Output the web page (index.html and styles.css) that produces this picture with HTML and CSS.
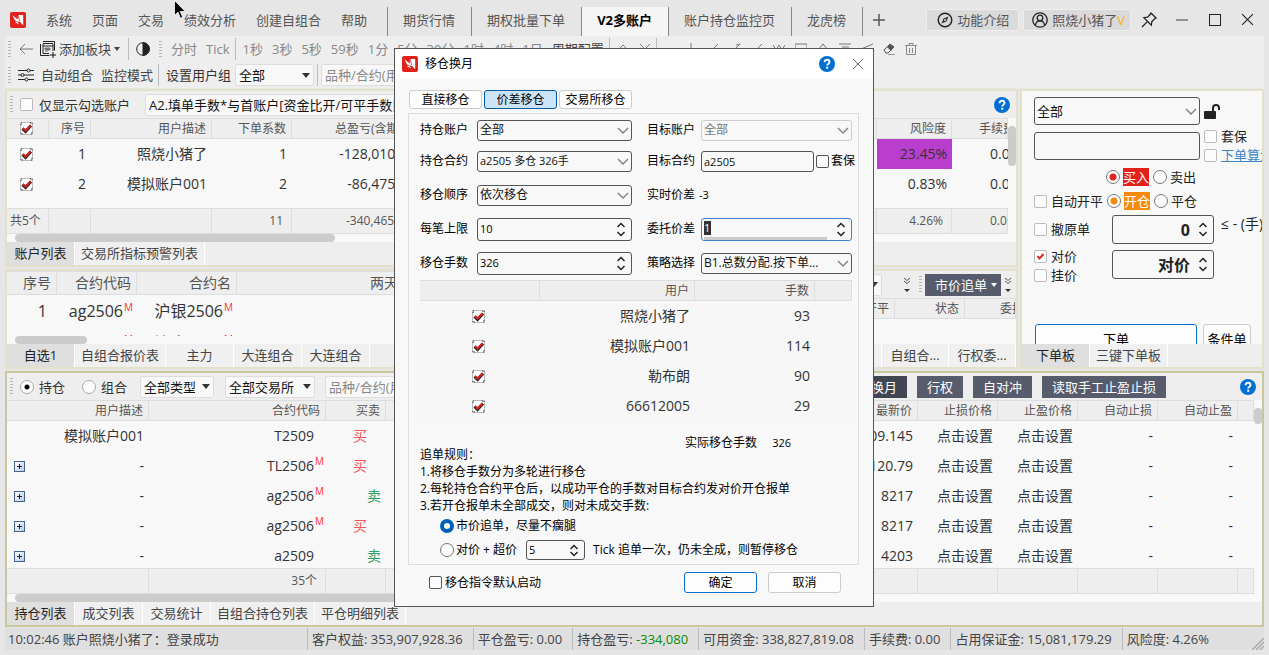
FILE: index.html
```html
<!DOCTYPE html>
<html lang="zh-CN">

<head>
    <meta charset="UTF-8">
    <title>V2多账户</title>
    <link rel="stylesheet" href="styles.css">
</head>

<body>
    <!-- 图标 -->
    <svg class="sprite" aria-hidden="true">
        <symbol id="logo" viewBox="0 0 16 16">
            <rect width="16" height="16" rx="2" fill="#e2211c"/>
            <path d="M2.500 3.200L7.800 7.600V4L9.400 3h3.800v10.200L9.800 9.800 7.400 9.600 5 8.400z" fill="#fff"/>
            <path d="M8 3.500l1.800 5.500" stroke="#e2211c" stroke-width=".8"/>
            <path d="M5 10.200l2.200-.6 2 3z" fill="#fff"/>
        </symbol>
        <symbol id="help" viewBox="0 0 16 16">
            <circle cx="8" cy="8" r="8" fill="#006fd1"/>
            <path d="M5.600 6.200C5.600 4.600 6.700 3.800 8 3.800s2.500.8 2.500 2.200c0 1.700-2.300 1.800-2.300 3.500" fill="none" stroke="#fff" stroke-width="1.900"/>
            <rect x="7.200" y="10.700" width="2" height="2" fill="#fff"/>
        </symbol>
        <symbol id="close" viewBox="0 0 12 12"><path d="M1 1l10 10M11 1L1 11"/></symbol>
        <symbol id="up" viewBox="0 0 10 6"><path d="M1.500 5L5 1.500 8.500 5"/></symbol>
        <symbol id="down" viewBox="0 0 10 6"><path d="M1.500 1L5 4.500 8.500 1"/></symbol>
        <symbol id="more" viewBox="0 0 8 16"><path d="M1 1l3 2.500L7 1M1 4l3 2.500L7 4" fill="none" stroke="#555"/><path d="M1 12h6l-3 3z" fill="#333"/></symbol>
    </svg>

    <!-- 标题栏 -->
    <header class="titlebar">
        <svg class="logo"><use href="#logo"/></svg>
        <nav class="menu">
            <a href="#">系统</a>
            <a href="#">页面</a>
            <a href="#">交易</a>
            <a href="#">绩效分析</a>
            <a href="#">创建自组合</a>
            <a href="#">帮助</a>
        </nav>
        <nav class="pages">
            <a href="#">期货行情</a>
            <a href="#">期权批量下单</a>
            <a href="#" class="active">V2多账户</a>
            <a href="#">账户持仓监控页</a>
            <a href="#">龙虎榜</a>
        </nav>
        <button class="icon-btn add" aria-label="新建">
            <svg width="12" height="12" viewBox="0 0 12 12"><path d="M6 0v12M0 6h12" stroke="#555" stroke-width="1.500"/></svg>
        </button>
        <div class="window-tools">
            <button class="pill">
                <svg width="16" height="16" viewBox="0 0 16 16"><circle cx="8" cy="8" r="6.800" stroke-width="1.400"/><path d="M11.500 4.500L9.500 9.500l-5 2 2-5z" fill="#333" stroke="none"/><circle cx="8" cy="8" r="1" fill="#ddd" stroke="none"/></svg>
                功能介绍
            </button>
            <button class="pill">
                <svg width="16" height="16" viewBox="0 0 16 16"><circle cx="8" cy="8" r="7.200" stroke-width="1.300"/><circle cx="8" cy="6" r="2.800" stroke-width="1.300"/><path d="M3.400 13.200c.4-3 2.300-4.300 4.600-4.300s4.200 1.300 4.600 4.300" stroke-width="1.300"/></svg>
                照烧小猪了<b class="vip">V</b>
            </button>
            <button class="icon-btn" aria-label="置顶">
                <svg width="16" height="16" viewBox="0 0 16 16"><path d="M10 1l5 5-1.300.7-2.800 2.800-.6 3.600-7.400-7.400 3.600-.6 2.800-2.800zM6.400 9.600L1 15" stroke-width="1.300"/></svg>
            </button>
            <button class="icon-btn" aria-label="最小化">
                <svg width="12" height="12" viewBox="0 0 12 12"><path d="M0 6h12" stroke-width="1.500" stroke="#777"/></svg>
            </button>
            <button class="icon-btn" aria-label="最大化">
                <svg width="12" height="12" viewBox="0 0 12 12"><rect x=".5" y=".5" width="11" height="11"/></svg>
            </button>
            <button class="icon-btn" aria-label="关闭">
                <svg width="13" height="13"><use href="#close"/></svg>
            </button>
        </div>
    </header>

    <!-- 工具栏 -->
    <div class="toolbars">
        <div class="toolbar periods">
            <i class="grip"></i>
            <button class="icon-btn back" aria-label="返回">
                <svg width="14" height="12" viewBox="0 0 14 12"><path d="M14 6H1M6 1L1 6l5 5" stroke="#777"/></svg>
            </button>
            <button class="plain dark">
                <svg width="17" height="17" viewBox="0 0 17 17"><path d="M3 .5h11.500v9M.5 3v11.500h9M3 2.500h10M3 3v9.500h6M13 3v7M3 5h10" /><path d="M5 7h5v2H5zM5 10h3" fill="#777" stroke="#777"/><path d="M13 11v6M10 14h6" stroke="#111"/></svg>
                添加板块
                <svg class="caret" width="6" height="4" viewBox="0 0 6 4"><path d="M0 0h6L3 4z"/></svg>
            </button>
            <i class="sep"></i>
            <button class="icon-btn contrast" aria-label="切换主题">
                <svg width="14" height="14" viewBox="0 0 14 14"><circle cx="7" cy="7" r="6.300"/><path d="M7 .7a6.300 6.300 0 0 1 0 12.600z" fill="#222"/></svg>
            </button>
            <i class="grip"></i>
            <button class="plain">分时</button>
            <button class="plain">Tick</button>
            <i class="sep"></i>
            <button class="plain">1秒</button>
            <button class="plain">3秒</button>
            <button class="plain">5秒</button>
            <button class="plain">59秒</button>
            <button class="plain">1分</button>
            <button class="plain">5分</button>
            <button class="plain">30分</button>
            <button class="plain">1时</button>
            <button class="plain">4时</button>
            <button class="plain">1日</button>
            <button class="plain dark">周期配置</button>
            <i class="sep"></i>
            <span class="draw-tools">
                <svg viewBox="0 0 12 12"><path d="M2 6l4-4 4 4v5"/></svg>
                <svg viewBox="0 0 12 12"><path d="M1 1l10 10M11 1L1 11"/></svg>
            </span>
            <i class="sep"></i>
            <span class="draw-tools second">
                <svg viewBox="0 0 12 12"><path d="M6 0v12"/></svg>
                <svg viewBox="0 0 12 12"><path d="M11 1L1 11"/></svg>
                <svg viewBox="0 0 12 12"><path d="M11 1L1 11M7 2l4-1"/></svg>
                <svg viewBox="0 0 12 12"><path d="M11 1L1 11"/></svg>
                <svg viewBox="0 0 12 12"><path d="M0 2l3 5 3-5 3 5 3-5"/></svg>
                <svg viewBox="0 0 12 12"><rect x="0" y="1" width="12" height="9"/></svg>
                <svg viewBox="0 0 12 12"><path d="M1 7l5-6 5 6z"/></svg>
                <svg viewBox="0 0 12 12"><path d="M0 1h12M3 4h7M0 8h12"/></svg>
                <svg viewBox="0 0 12 12"><path d="M12 1L0 6"/></svg>
                <svg viewBox="0 0 12 12"><path d="M1 7l6-6 4 3-6 6H3z" stroke="#555"/><path d="M4 4l3-3 4 3-3 4z" fill="#555" stroke="none"/><path d="M5 11.500h7" stroke="#999"/></svg>
                <svg viewBox="0 0 12 12"><path d="M0 2.500h12M4 2V.5h4V2M1.500 3v8.500h9V3M4.500 5v5M7.500 5v5" stroke="#888"/></svg>
            </span>
        </div>
        <div class="toolbar">
            <i class="grip"></i>
            <button class="icon-btn tune" aria-label="参数">
                <svg width="16" height="14" viewBox="0 0 16 14"><path d="M0 2.500h9M12 2.500h4M0 7h3M6 7h10M0 11.500h7M10 11.500h6"/><circle cx="10.500" cy="2.500" r="1.500"/><circle cx="4.500" cy="7" r="1.500"/><circle cx="8.500" cy="11.500" r="1.500"/></svg>
            </button>
            <button class="plain dark">自动组合</button>
            <button class="plain dark">监控模式</button>
            <i class="sep"></i>
            <label class="group-label" for="group">设置用户组</label>
            <select id="group" class="flat"><option>全部</option></select>
            <i class="sep tight"></i>
            <input class="flat search" type="text" placeholder="品种/合约(用户)" aria-label="品种/合约">
        </div>
    </div>

    <main class="workspace">
        <!-- 账户列表 -->
        <section class="panel accounts">
            <div class="toolbar">
                <i class="grip"></i>
                <label class="check wide"><input type="checkbox">仅显示勾选账户</label>
                <select class="flat rule" aria-label="分配规则"><option>A2.填单手数*与首账户[资金比开/可平手数比平]</option></select>
                <button class="help" aria-label="帮助"><svg width="16" height="16"><use href="#help"/></svg></button>
            </div>
            <div class="body">
                <div class="scroll">
                    <table>
                        <colgroup><col class="w42"><col class="w42"><col class="w121"><col class="w80"><col class="w128"><col><col class="w75"><col class="w56"></colgroup>
                        <thead>
                            <tr>
                                <th class="center"><input class="tick" type="checkbox" checked aria-label="全选"></th>
                                <th>序号</th><th>用户描述</th><th>下单系数</th><th>总盈亏(含期权)</th><th></th><th>风险度</th><th class="cut">手续费</th>
                            </tr>
                        </thead>
                        <tbody>
                            <tr>
                                <td class="center"><input class="tick" type="checkbox" checked aria-label="照烧小猪了"></td>
                                <td>1</td><td>照烧小猪了</td><td>1</td><td>-128,010.00</td><td></td><td class="risk">23.45%</td><td class="cut num">0.00</td>
                            </tr>
                            <tr>
                                <td class="center"><input class="tick" type="checkbox" checked aria-label="模拟账户001"></td>
                                <td>2</td><td>模拟账户001</td><td>2</td><td>-86,475.00</td><td></td><td>0.83%</td><td class="cut num">0.00</td>
                            </tr>
                            <tr class="rest"><td colspan="8"></td></tr>
                        </tbody>
                        <tfoot>
                            <tr><td class="total">共5个</td><td></td><td></td><td>11</td><td>-340,465.00</td><td></td><td>4.26%</td><td class="cut num">0.00</td></tr>
                        </tfoot>
                    </table>
                </div>
                <div class="vbar"><i></i></div>
            </div>
            <div class="hbar"><i></i></div>
            <nav class="tabs">
                <a href="#" class="active">账户列表</a>
                <a href="#">交易所指标预警列表</a>
            </nav>
        </section>

        <!-- 自选行情 -->
        <section class="panel quotes">
            <div class="body">
                <div class="scroll">
                    <table class="large">
                        <colgroup><col class="w50"><col class="w80"><col class="w100"><col class="w195"><col></colgroup>
                        <thead>
                            <tr><th>序号</th><th>合约代码</th><th>合约名</th><th>两天走势</th><th></th></tr>
                        </thead>
                        <tbody>
                            <tr><td class="idx">1</td><td class="code">ag2506<sup>M</sup></td><td class="code">沪银2506<sup>M</sup></td><td></td><td></td></tr>
                            <tr><td class="idx">2</td><td class="code">au2506<sup>M</sup></td><td class="code">沪金2506<sup>M</sup></td><td></td><td></td></tr>
                        </tbody>
                    </table>
                </div>
            </div>
            <div class="hbar"><i></i></div>
            <nav class="tabs">
                <a href="#" class="active">自选1</a>
                <a href="#">自组合报价表</a>
                <a href="#">主力</a>
                <a href="#">大连组合</a>
                <a href="#">大连组合</a>
            </nav>
        </section>

        <!-- 委托 -->
        <section class="panel orders">
            <div class="toolbar">
                <select class="flat state" aria-label="委托状态"><option>全部</option></select>
                <svg class="more" width="8" height="16"><use href="#more"/></svg>
                <i class="grip"></i>
                <button class="solid chase">市价追单<svg class="caret" width="6" height="4" viewBox="0 0 6 4"><path d="M0 0h6L3 4z"/></svg></button>
                <svg class="more" width="8" height="16"><use href="#more"/></svg>
            </div>
            <div class="body">
                <div class="scroll">
                    <table>
                        <colgroup><col><col class="w70"><col class="w51"></colgroup>
                        <thead><tr><th>开平</th><th>状态</th><th class="cut wide">委托价</th></tr></thead>
                    </table>
                </div>
            </div>
            <nav class="tabs end">
                <a href="#">委托列表</a>
                <a href="#">自组合...</a>
                <a href="#">行权委...</a>
            </nav>
        </section>

        <!-- 下单板 -->
        <section class="panel ticket">
            <form class="ticket-form">
                <div class="line">
                    <select class="boxed" aria-label="账户"><option>全部</option></select>
                    <svg width="17" height="17" viewBox="0 0 17 17"><rect x="0" y="8" width="12" height="8" rx="1" fill="#222" stroke="none"/><path d="M9 8V5a3 3 0 0 1 6 0v2" fill="none" stroke="#222" stroke-width="2"/></svg>
                </div>
                <div class="line contract">
                    <input class="boxed" type="text" aria-label="合约">
                    <div class="stack">
                        <label class="check"><input type="checkbox">套保</label>
                        <div class="check"><input type="checkbox" aria-label="下单算法"><a href="#">下单算法</a></div>
                    </div>
                </div>
                <div class="line side">
                    <label class="radio buy"><input type="radio" name="side" checked><span>买入</span></label>
                    <label class="radio"><input type="radio" name="side">卖出</label>
                </div>
                <div class="line offset">
                    <label class="check"><input type="checkbox">自动开平</label>
                    <label class="radio open"><input type="radio" name="offset" checked><span>开仓</span></label>
                    <label class="radio"><input type="radio" name="offset">平仓</label>
                </div>
                <div class="amounts">
                    <div class="stack">
                        <label class="check origin"><input type="checkbox">撤原单</label>
                        <label class="check"><input type="checkbox" checked>对价</label>
                        <label class="check"><input type="checkbox">挂价</label>
                    </div>
                    <div class="spins">
                        <div class="line">
                            <span class="spin big"><input type="text" value="0" aria-label="手数"><span class="arrows"><button type="button" aria-label="加"><svg width="10" height="6"><use href="#up"/></svg></button><button type="button" aria-label="减"><svg width="10" height="6"><use href="#down"/></svg></button></span></span>
                            <span class="limit">≤ - (手)</span>
                        </div>
                        <span class="spin big"><input type="text" value="对价" aria-label="价格"><span class="arrows"><button type="button" aria-label="加"><svg width="10" height="6"><use href="#up"/></svg></button><button type="button" aria-label="减"><svg width="10" height="6"><use href="#down"/></svg></button></span></span>
                    </div>
                </div>
                <div class="submit">
                    <button type="button" class="btn primary">下单</button>
                    <button type="button" class="btn">条件单</button>
                </div>
            </form>
            <nav class="tabs">
                <a href="#" class="active">下单板</a>
                <a href="#">三键下单板</a>
            </nav>
        </section>

        <!-- 持仓列表 -->
        <section class="panel positions">
            <div class="toolbar">
                <i class="grip"></i>
                <label class="radio"><input type="radio" name="kind" checked>持仓</label>
                <label class="radio"><input type="radio" name="kind">组合</label>
                <select class="flat kind" aria-label="类型"><option>全部类型</option></select>
                <select class="flat exchange" aria-label="交易所"><option>全部交易所</option></select>
                <input class="flat search" type="text" placeholder="品种/合约(用户)" aria-label="品种/合约">
                <div class="actions">
                    <button class="solid pressed">移仓换月</button>
                    <button class="solid">行权</button>
                    <button class="solid">自对冲</button>
                    <button class="solid">读取手工止盈止损</button>
                </div>
                <button class="help" aria-label="帮助"><svg width="16" height="16"><use href="#help"/></svg></button>
            </div>
            <div class="body">
                <div class="scroll">
                    <table>
                        <colgroup><col class="w142"><col class="w177"><col class="w60"><col><col class="w80"><col class="w80"><col class="w80"><col class="w80"><col class="w16"></colgroup>
                        <thead>
                            <tr><th>用户描述</th><th>合约代码</th><th>买卖</th><th>最新价</th><th>止损价格</th><th>止盈价格</th><th>自动止损</th><th>自动止盈</th><th></th></tr>
                        </thead>
                        <tbody>
                            <tr><td>模拟账户001</td><td class="code">T2509<sup></sup></td><td class="long">买</td><td>109.145</td><td>点击设置</td><td>点击设置</td><td>-</td><td>-</td><td></td></tr>
                            <tr><td><div class="expand"><button aria-label="展开"></button>-</div></td><td class="code">TL2506<sup>M</sup></td><td class="long">买</td><td>120.79</td><td>点击设置</td><td>点击设置</td><td>-</td><td>-</td><td></td></tr>
                            <tr><td><div class="expand"><button aria-label="展开"></button>-</div></td><td class="code">ag2506<sup>M</sup></td><td class="short">卖</td><td>8217</td><td>点击设置</td><td>点击设置</td><td>-</td><td>-</td><td></td></tr>
                            <tr><td><div class="expand"><button aria-label="展开"></button>-</div></td><td class="code">ag2506<sup>M</sup></td><td class="long">买</td><td>8217</td><td>点击设置</td><td>点击设置</td><td>-</td><td>-</td><td></td></tr>
                            <tr><td><div class="expand"><button aria-label="展开"></button>-</div></td><td class="code">a2509<sup></sup></td><td class="short">卖</td><td>4203</td><td>点击设置</td><td>点击设置</td><td>-</td><td>-</td><td></td></tr>
                        </tbody>
                        <tfoot>
                            <tr><td></td><td>35个</td><td></td><td></td><td></td><td></td><td></td><td></td><td></td></tr>
                        </tfoot>
                    </table>
                </div>
                <div class="vbar"><i></i></div>
            </div>
            <div class="hbar"><i></i></div>
            <nav class="tabs">
                <a href="#" class="active">持仓列表</a>
                <a href="#">成交列表</a>
                <a href="#">交易统计</a>
                <a href="#">自组合持仓列表</a>
                <a href="#">平仓明细列表</a>
            </nav>
        </section>
    </main>

    <!-- 状态栏 -->
    <footer class="statusbar">
        <span class="message">10:02:46 账户照烧小猪了：登录成功</span>
        <span>客户权益: 353,907,928.36</span>
        <span>平仓盈亏: 0.00</span>
        <span>持仓盈亏: <b>-334,080</b></span>
        <span>可用资金: 338,827,819.08</span>
        <span>手续费: 0.00</span>
        <span>占用保证金: 15,081,179.29</span>
        <span>风险度: 4.26%</span>
        <svg class="resize" width="12" height="12" viewBox="0 0 12 12"><path d="M0 12L12 0M4 12l8-8M8 12l4-4" stroke="#aaa" stroke-width="1.500"/></svg>
    </footer>

    <!-- 移仓换月弹窗 -->
    <div class="overlay">
        <form class="dialog" role="dialog" aria-labelledby="dialog-title">
            <div class="dialog-head">
                <svg width="16" height="16"><use href="#logo"/></svg>
                <h1 id="dialog-title">移仓换月</h1>
                <button type="button" class="help" aria-label="帮助"><svg width="16" height="16"><use href="#help"/></svg></button>
                <button type="button" class="icon-btn x" aria-label="关闭"><svg width="12" height="12"><use href="#close"/></svg></button>
            </div>
            <div class="modes">
                <button type="button">直接移仓</button>
                <button type="button" class="active">价差移仓</button>
                <button type="button">交易所移仓</button>
            </div>
            <div class="group">
                <div class="fields">
                    <label for="f1">持仓账户</label>
                    <select id="f1" class="boxed"><option>全部</option></select>
                    <label for="f2">目标账户</label>
                    <select id="f2" class="boxed" disabled><option>全部</option></select>

                    <label for="f3">持仓合约</label>
                    <select id="f3" class="boxed small"><option>a2505 多仓 326手</option></select>
                    <label for="f4">目标合约</label>
                    <div class="target">
                        <input id="f4" class="boxed small" type="text" value="a2505">
                        <label class="check"><input type="checkbox">套保</label>
                    </div>

                    <label for="f5">移仓顺序</label>
                    <select id="f5" class="boxed"><option>依次移仓</option></select>
                    <label for="diff">实时价差</label>
                    <output id="diff" class="diff">-3</output>

                    <label for="f6">每笔上限</label>
                    <span class="spin"><input id="f6" type="text" value="10"><span class="arrows"><button type="button" aria-label="加"><svg width="10" height="6"><use href="#up"/></svg></button><button type="button" aria-label="减"><svg width="10" height="6"><use href="#down"/></svg></button></span></span>
                    <label for="f7">委托价差</label>
                    <span class="spin focus"><span class="entry"><input id="f7" type="text" value="1"></span><span class="arrows"><button type="button" aria-label="加"><svg width="10" height="6"><use href="#up"/></svg></button><button type="button" aria-label="减"><svg width="10" height="6"><use href="#down"/></svg></button></span></span>

                    <label for="f8">移仓手数</label>
                    <span class="spin"><input id="f8" type="text" value="326"><span class="arrows"><button type="button" aria-label="加"><svg width="10" height="6"><use href="#up"/></svg></button><button type="button" aria-label="减"><svg width="10" height="6"><use href="#down"/></svg></button></span></span>
                    <label for="f9">策略选择</label>
                    <select id="f9" class="boxed"><option>B1.总数分配.按下单...</option></select>
                </div>
                <table>
                    <colgroup><col class="w120"><col class="w155"><col class="w120"><col></colgroup>
                    <thead><tr><th></th><th>用户</th><th>手数</th><th></th></tr></thead>
                    <tbody>
                        <tr><td class="center"><input class="tick" type="checkbox" checked aria-label="照烧小猪了"></td><td>照烧小猪了</td><td>93</td><td></td></tr>
                        <tr><td class="center"><input class="tick" type="checkbox" checked aria-label="模拟账户001"></td><td>模拟账户001</td><td>114</td><td></td></tr>
                        <tr><td class="center"><input class="tick" type="checkbox" checked aria-label="勒布朗"></td><td>勒布朗</td><td>90</td><td></td></tr>
                        <tr><td class="center"><input class="tick" type="checkbox" checked aria-label="66612005"></td><td>66612005</td><td>29</td><td></td></tr>
                    </tbody>
                </table>
                <div class="summary">
                    <span>追单规则：</span>
                    <span class="actual">实际移仓手数<output>326</output></span>
                </div>
                <p>1.将移仓手数分为多轮进行移仓</p>
                <p>2.每轮持仓合约平仓后，以成功平仓的手数对目标合约发对价开仓报单</p>
                <p>3.若开仓报单未全部成交，则对未成交手数:</p>
                <div class="option">
                    <label class="radio"><input type="radio" name="chase" checked>市价追单，尽量不瘸腿</label>
                </div>
                <div class="option">
                    <label class="radio"><input type="radio" name="chase">对价 + 超价</label>
                    <span class="spin ticks"><input type="text" value="5" aria-label="超价"><span class="arrows"><button type="button" aria-label="加"><svg width="10" height="6"><use href="#up"/></svg></button><button type="button" aria-label="减"><svg width="10" height="6"><use href="#down"/></svg></button></span></span>
                    <span>Tick 追单一次，仍未全成，则暂停移仓</span>
                </div>
            </div>
            <div class="dialog-foot">
                <label class="check"><input type="checkbox">移仓指令默认启动</label>
                <button type="button" class="btn primary">确定</button>
                <button type="button" class="btn">取消</button>
            </div>
        </form>
    </div>

    <!-- 鼠标指针 -->
    <svg class="cursor" width="12" height="20" viewBox="0 0 12 20"><path d="M.5 .5v15l3.500-3.300 2.400 6 2.300-1-2.400-5.700h5z" fill="#000" stroke="#fff" stroke-width=".8"/></svg>
</body>

</html>
```
FILE: styles.css
```css
* {
    box-sizing: border-box;
    margin: 0;
    padding: 0;
}

body {
    display: flex;
    flex-direction: column;
    height: 100vh;
    padding: 0 5px 5px;
    overflow: hidden;
    background: #e6e6e6;
    color: #333;
    font: 13px/18px "Open Sans", "Noto Sans CJK SC", sans-serif;
    white-space: nowrap;
}

a {
    color: inherit;
    text-decoration: none;
}

button, input, select {
    font: inherit;
    color: inherit;
}

button {
    border: 0;
    background: none;
    white-space: nowrap;
}

svg {
    flex: none;
    fill: none;
    stroke: #222;
}

use {
    stroke: inherit;
}

.sprite {
    position: absolute;
    width: 0;
    height: 0;
}

.caret {
    fill: #444;
    stroke: none;
}

/* 标题栏 */
.titlebar {
    display: flex;
    align-items: center;
    flex: none;
    height: 36px;
    padding-top: 3px;
    color: #555;
}

.logo {
    width: 16px;
    height: 16px;
    margin: 0 20px 0 5px;
    stroke: none;
}

.menu {
    display: flex;
    gap: 20px;
    margin-right: 20px;
}

.pages {
    display: flex;
    align-self: flex-end;
    height: 29px;
}

.pages a {
    padding: 4px 16px 4px 15px;
    border-right: 1px solid #888;
}

.pages a:first-child {
    border-left: 1px solid #888;
}

.pages .active {
    background: #f5f5f5;
    color: #000;
    font-weight: bold;
}

.icon-btn {
    display: flex;
    align-items: center;
    justify-content: center;
}

.add {
    width: 32px;
}

.window-tools {
    display: flex;
    align-items: center;
    margin-left: auto;
}

.window-tools .icon-btn {
    width: 33px;
}

.pill {
    display: flex;
    align-items: center;
    gap: 4px;
    height: 22px;
    margin-right: 4px;
    padding: 0 9px 0 10px;
    border: 1px solid #eee;
    border-radius: 3px;
    background: #dadada;
}

.pill .vip {
    margin-left: -4px;
    color: #ffb400;
    font-weight: normal;
}

.pill + .pill {
    margin-right: 1px;
    padding: 0 5px 0 8px;
}

/* 工具栏 */
.toolbars {
    flex: none;
    background: #eee;
}

.toolbar {
    display: flex;
    align-items: center;
    flex: none;
    height: 27px;
    padding-left: 3px;
}

.toolbars .toolbar {
    height: 26px;
}

.grip {
    flex: none;
    width: 3px;
    height: 17px;
    background: repeating-linear-gradient(#b5b5b5 0 1px, #eee 1px 3px);
}

.sep {
    flex: none;
    width: 1px;
    height: 22px;
    margin: 0 7px 0 5px;
    background: #bbb;
}

.sep.tight {
    margin: 0 3px;
}

.plain {
    display: flex;
    align-items: center;
    gap: 2px;
    color: #888;
}

.plain.dark {
    color: #444;
}

.plain + .plain {
    margin-left: 8px;
}

.periods .plain + .plain {
    margin-left: 9px;
}

.plain .caret {
    margin: 0 3px 0 1px;
}

.back {
    margin: 0 7px 0 8px;
}

.contrast {
    margin-right: 9px;
}

.periods .grip ~ .grip {
    margin-right: 9px;
}

.draw-tools {
    display: flex;
    gap: 10px;
}

.draw-tools svg {
    width: 12px;
    height: 12px;
    stroke: #777;
}

.draw-tools.second {
    margin-left: 21px;
}

.tune {
    margin: 0 7px;
}

.group-label {
    margin-right: 4px;
}

.flat, .boxed {
    appearance: none;
    height: 22px;
    padding: 0 3px;
    border: 1px solid #ddd;
    border-radius: 2px;
    background: #f8f8f8;
    color: #111;
    outline: 0;
}

select.flat {
    padding-right: 18px;
    background: #f8f8f8 url("data:image/svg+xml,%3Csvg xmlns='http://www.w3.org/2000/svg' width='8' height='5'%3E%3Cpath d='M0 0h8L4 5z' fill='%23333'/%3E%3C/svg%3E") no-repeat right 3px center;
}

.flat::placeholder {
    color: #888;
}

#group {
    width: 79px;
}

.search {
    width: 140px;
}

.solid {
    display: flex;
    align-items: center;
    gap: 4px;
    height: 22px;
    padding: 0 10px;
    background: #565c6c;
    color: #fff;
}

.solid .caret {
    fill: #fff;
}

.solid.pressed {
    background: #414652;
}

.help {
    display: flex;
    margin-left: auto;
}

.help svg {
    stroke: none;
}

/* 勾选框和单选框 */
.check, .radio {
    display: flex;
    align-items: center;
    gap: 4px;
}

input[type=checkbox] {
    appearance: none;
    flex: none;
    width: 13px;
    height: 13px;
    border: 1px solid #bbb;
    border-radius: 2px;
    background: #fcfcfc;
}

input[type=checkbox]:checked {
    background: #fff url("data:image/svg+xml,%3Csvg xmlns='http://www.w3.org/2000/svg' width='11' height='11'%3E%3Cpath d='M2.500 5l2 2.500 4-4.500' fill='none' stroke='%23e2211c' stroke-width='2'/%3E%3C/svg%3E") center;
}

input.tick {
    display: block;
    margin: auto;
    border: 0;
    border-radius: 0;
}

/* 四角带点的勾选框 */
input.tick:checked {
    background: #fff url("data:image/svg+xml,%3Csvg xmlns='http://www.w3.org/2000/svg' width='13' height='13'%3E%3Cpath d='M.5.5h12v12H.5z' fill='none' stroke='%23bbb'/%3E%3Cpath d='M1 3V1h2M10 1h2v2M12 10v2h-2M3 12H1v-2' fill='none' stroke='%23333' stroke-dasharray='1 1'/%3E%3Cpath d='M2.500 6.500l3 3L11 3.500' fill='none' stroke='%23222' stroke-width='3'/%3E%3Cpath d='M3 6l2.500 2.500L10.500 3.500' fill='none' stroke='%23d22' stroke-width='2'/%3E%3C/svg%3E") center;
}

input[type=radio] {
    appearance: none;
    flex: none;
    width: 14px;
    height: 14px;
    border: 1px solid #777;
    border-radius: 50%;
    background: #fcfcfc;
}

.positions input[type=radio] {
    border-color: #aaa;
}

.positions input[type=radio]:checked {
    background: radial-gradient(#000 0 2px, #fff 3px);
}

.buy input[type=radio]:checked {
    background: radial-gradient(#e2211c 0 3px, #fff 4px);
}

.open input[type=radio]:checked {
    background: radial-gradient(#f58a0b 0 3px, #fff 4px);
}

/* 面板 */
.workspace {
    display: grid;
    flex: 1;
    min-height: 0;
    grid-template-columns: 595fr 416fr 244px;
    grid-template-rows: 178fr 100fr 256fr;
    gap: 2px;
    padding-top: 1px;
}

.panel {
    display: flex;
    flex-direction: column;
    min-width: 0;
    min-height: 0;
    overflow: hidden;
    border: 2px solid #e4e1cb;
    background: #eee;
}

.accounts {
    grid-column: 1 / 3;
}

.ticket {
    grid-area: 1 / 3 / 3 / 4;
}

.positions {
    grid-column: 1 / 4;
    border-color: #cbc79d;
}

.body {
    display: flex;
    flex: 1;
    min-height: 0;
    background: #f8f8f8;
}

.scroll {
    flex: 1;
    min-width: 0;
    overflow: hidden;
}

.vbar {
    width: 8px;
    background: #f8f8f8;
}

.vbar i {
    display: block;
    width: 8px;
    height: 40px;
    margin-top: 8px;
    border-radius: 4px;
    background: #ccc;
}

.positions .vbar i {
    height: 16px;
}

.hbar {
    flex: none;
    height: 8px;
    padding-left: 8px;
    background: #f8f8f8;
}

.hbar i {
    display: block;
    width: 32%;
    height: 8px;
    border-radius: 4px;
    background: #ccc;
}

.quotes .hbar i {
    width: 72px;
}

.positions .hbar i {
    width: 60%;
}

.tabs {
    display: flex;
    flex: none;
    height: 23px;
    background: #eee;
    color: #444;
}

.tabs a {
    min-width: 68px;
    padding: 2px 6px;
    border-right: 1px solid #fff;
    background: #f0f0f0;
    text-align: center;
}

.tabs .active {
    background: #dfdfdf;
    color: #222;
}

.tabs.end {
    justify-content: flex-end;
}

.tabs.end a {
    min-width: 67px;
}

table {
    width: 100%;
    height: 100%;
    table-layout: fixed;
    border-spacing: 0;
    font-size: 14px;
}

th, td {
    padding: 0 5px 0 0;
    overflow: hidden;
    font-weight: normal;
    text-align: right;
}

tbody tr {
    height: 30px;
}

tbody .rest {
    height: auto;
}

th {
    height: 21px;
    border: 1px solid #ddd;
    border-left: 0;
    background: #eee;
    color: #555;
    font-size: 12px;
}

tfoot {
    position: sticky;
    bottom: 0;
}

tfoot td {
    height: 26px;
    padding-right: 8px;
    border: solid #ddd;
    border-width: 1px 1px 1px 0;
    background: #eee;
    color: #555;
    font-size: 12px;
}

.center, td.center {
    padding: 0 3px 0 0;
    text-align: center;
}

.cut {
    padding-left: 27px;
    text-align: left;
}

.cut.num {
    padding-left: 38px;
}

.cut.wide {
    padding-left: 35px;
}

td.total {
    padding-left: 3px;
    text-align: left;
}

.risk {
    background: #ba3ecd;
}

td.idx {
    padding-right: 10px;
}

td.code {
    padding-right: 2px;
}

.large {
    height: auto;
}

.large th {
    height: 24px;
    font-size: 14px;
}

.large tbody tr {
    height: 32px;
    font-size: 16px;
}

.large td.code {
    padding-right: 4px;
}

sup {
    display: inline-block;
    width: 9px;
    margin-left: 1px;
    color: #f33;
    font-size: 10px;
    line-height: 1px;
    vertical-align: 6px;
}

td.long {
    padding-right: 19px;
    color: #f0565c;
}

td.short {
    color: #2f9e63;
}

.expand {
    display: flex;
    align-items: center;
    justify-content: space-between;
    padding-left: 7px;
}

.expand button {
    width: 11px;
    height: 11px;
    border: 1px solid #44638f;
    background: linear-gradient(#223, #223) center / 5px 1px no-repeat, linear-gradient(#223, #223) center / 1px 5px no-repeat, linear-gradient(135deg, #fff, #b9cbe4);
}

.w16 { width: 16px; }
.w42 { width: 42px; }
.w50 { width: 50px; }
.w51 { width: 51px; }
.w56 { width: 56px; }
.w60 { width: 60px; }
.w70 { width: 70px; }
.w75 { width: 75px; }
.w80 { width: 80px; }
.w100 { width: 100px; }
.w120 { width: 120px; }
.w121 { width: 121px; }
.w128 { width: 128px; }
.w142 { width: 142px; }
.w155 { width: 155px; }
.w177 { width: 177px; }
.w195 { width: 195px; }

/* 账户 */
.accounts .toolbar {
    padding: 0 6px 0 3px;
}

.check.wide {
    margin: 0 15px 0 7px;
    gap: 6px;
}

.rule {
    width: 320px;
}

/* 委托 */
.orders .toolbar {
    justify-content: flex-end;
    gap: 8px;
    padding-right: 4px;
}

.orders .state {
    width: 100px;
    margin-right: 13px;
}

.orders .solid {
    margin: 0 -5px;
    padding: 0 4px 0 10px;
}

.orders .more {
    stroke: none;
}

.orders table {
    height: auto;
}

/* 下单板 */
.ticket {
    background: #f8f8f8;
    color: #222;
}

.ticket-form {
    display: flex;
    flex: 1;
    flex-direction: column;
    min-height: 0;
    padding: 6px 0 0 12px;
    overflow: hidden;
}

.line {
    display: flex;
    align-items: center;
    flex: none;
    gap: 4px;
}

.boxed {
    padding: 0 2px;
    border-color: #555;
    border-radius: 3px;
}

select.boxed {
    padding-right: 18px;
    background: #f8f8f8 url("data:image/svg+xml,%3Csvg xmlns='http://www.w3.org/2000/svg' width='12' height='7'%3E%3Cpath d='M1 1l5 5 5-5' fill='none' stroke='%23888' stroke-width='1.500'/%3E%3C/svg%3E") no-repeat right 2px center;
    text-overflow: ellipsis;
}

.ticket .boxed {
    width: 166px;
    height: 28px;
}

.contract {
    margin: 2px 0 3px;
}

.contract a {
    color: #3d85c6;
    text-decoration: underline;
}

.stack {
    display: flex;
    flex-direction: column;
    gap: 1px;
}

.side {
    height: 20px;
    padding-left: 72px;
}

.offset {
    height: 28px;
}

.ticket .radio {
    gap: 3px;
}

.buy span {
    background: #e2211c;
    color: #fff;
}

.open span {
    background: #f58a0b;
    color: #fff;
}

.amounts {
    display: flex;
    gap: 22px;
}

.amounts .origin {
    margin: 5px 0 8px;
}

.spins {
    display: flex;
    flex-direction: column;
    gap: 6px;
}

.spin {
    display: flex;
    align-items: center;
    flex: none;
    height: 23px;
    padding: 0 5px 0 2px;
    border: 1px solid #555;
    border-radius: 3px;
    background: #f8f8f8;
}

.spin input {
    flex: 1;
    width: 0;
    min-width: 0;
    border: 0;
    background: none;
    outline: 0;
}

.arrows {
    display: flex;
    flex-direction: column;
    gap: 3px;
}

.arrows button {
    display: flex;
}

.arrows svg {
    stroke-width: 1.5;
}

.spin.big {
    width: 102px;
    height: 29px;
    font-size: 16px;
    font-weight: bold;
}

.spin.big input {
    padding-right: 8px;
    text-align: right;
}

.limit {
    align-self: flex-start;
    margin-left: 3px;
    font-size: 14px;
}

.submit {
    display: flex;
    flex: none;
    gap: 6px;
    margin-top: 40px;
    padding-left: 1px;
}

.btn {
    height: 21px;
    border: 1px solid #ccc;
    border-radius: 3px;
    background: #fdfdfd;
    color: #000;
}

.btn.primary {
    border-color: #0a6ed1;
}

.submit .btn {
    width: 48px;
    height: 30px;
}

.submit .primary {
    width: 162px;
}

/* 持仓 */
.positions .toolbar {
    padding-right: 6px;
}

.positions .radio {
    margin: 0 10px 0 7px;
    gap: 5px;
}

.positions .kind {
    width: 74px;
    margin: 0 11px 0 3px;
}

.positions .exchange {
    width: 90px;
    margin-right: 10px;
}

.actions {
    display: flex;
    gap: 10px;
    margin-left: auto;
    margin-right: 74px;
}

.positions .help {
    margin-left: 0;
}

/* 状态栏 */
.statusbar {
    display: flex;
    flex: none;
    align-items: center;
    height: 22px;
    margin-top: 1px;
    background: #dfdfdf;
    color: #444;
}

.statusbar span {
    padding: 2px 10px 2px 4px;
    border-left: 1px solid #bbb;
}

.statusbar .message {
    width: 302px;
    padding-left: 3px;
    border-left: 0;
}

.statusbar b {
    color: #0a8a0a;
    font-weight: normal;
}

.resize {
    align-self: flex-end;
    margin-left: auto;
}

/* 弹窗 */
.overlay {
    position: fixed;
    inset: 0;
    display: grid;
    place-items: center;
    padding-right: 1px;
}

.dialog {
    width: 480px;
    border: 1px solid #555;
    background: #f8f8f8;
    color: #000;
    font-size: 12px;
    line-height: 16px;
}

.dialog-head {
    display: flex;
    align-items: center;
    height: 30px;
    padding: 0 9px 0 7px;
    background: #fff;
}

.dialog-head > svg {
    stroke: none;
}

.dialog-head h1 {
    margin-left: 7px;
    font-size: 12px;
    font-weight: normal;
}

.dialog-head .x {
    margin-left: 17px;
}

.dialog-head .x svg {
    stroke: #666;
}

.modes {
    display: flex;
    gap: 2px;
    margin: 11px 14px 4px;
}

.modes button {
    width: 73px;
    height: 19px;
    border: 1px solid #ccc;
    border-radius: 3px;
    background: #fdfdfd;
    line-height: 16px;
}

.modes .active {
    border-color: #005a9e;
    background: #cce4f7;
}

.group {
    margin: 0 14px 0 13px;
    padding: 2px 6px 2px 11px;
    border: 1px solid #ddd;
}

.fields {
    display: grid;
    grid-template-columns: 57px 155px 69px 1fr;
    grid-template-rows: 28px repeat(4, 34px);
    align-items: center;
}

.fields > label:nth-child(4n + 3) {
    padding-left: 15px;
}

.fields .boxed {
    width: 100%;
    height: 21px;
}

.boxed:disabled {
    border-color: #ccc;
    color: #777;
    opacity: 1;
}

.dialog .small, .dialog .spin, .diff, .actual output {
    font-size: 11px;
}

.target {
    display: flex;
    align-items: center;
    gap: 2px;
    margin-right: -3px;
}

.target .boxed {
    flex: 1;
    width: 0;
    min-width: 0;
}

.target .check {
    gap: 2px;
}

.dialog .check input {
    border-color: #555;
}

.diff {
    margin-left: -2px;
}

.spin.focus {
    border-color: #3d85c6;
}

.entry {
    display: flex;
    flex: 1;
    align-self: stretch;
    margin-right: 9px;
    border-bottom: 3px solid #ccc;
}

.entry input {
    flex: none;
    width: 7px;
    height: 14px;
    margin-top: 2px;
    background: #333;
    color: #fff;
}

.group table {
    height: auto;
    margin-bottom: 14px;
    background: #f7f7f7;
    color: #333;
}

.summary {
    display: flex;
    justify-content: space-between;
    height: 28px;
}

.summary span {
    align-self: flex-end;
}

.summary .actual {
    display: flex;
    align-self: flex-start;
    gap: 15px;
    padding-right: 61px;
}

.group p {
    line-height: 17px;
}

.option {
    display: flex;
    align-items: center;
    height: 24px;
    padding-left: 20px;
}

.option .radio {
    gap: 2px;
}

.option input[type=radio]:checked {
    border: 4px solid #005fb8;
}

.spin.ticks {
    width: 59px;
    height: 20px;
    margin: 0 8px 0 9px;
}

.ticks .arrows {
    gap: 1px;
}

.dialog-foot {
    display: flex;
    align-items: center;
    gap: 11px;
    height: 41px;
    padding: 0 32px 6px 34px;
}

.dialog-foot .check {
    margin-right: auto;
    gap: 3px;
}

.dialog-foot .btn {
    width: 73px;
}

.cursor {
    position: absolute;
    top: 0;
    left: 174px;
}
```
